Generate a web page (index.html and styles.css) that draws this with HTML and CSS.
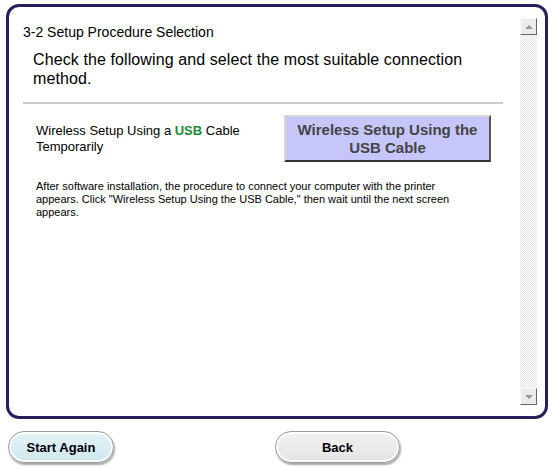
FILE: index.html
```html
<!DOCTYPE html>
<html lang="en">
<head>
    <title>Setup Procedure Selection</title>
    <meta charset="UTF-8" />
    <link rel="stylesheet" href="styles.css">
</head>
<body>
    <div class="frame">
        <div class="content">
            <div class="title">3-2 Setup Procedure Selection</div>
            <div class="lead">Check the following and select the most suitable connection method.</div>
            <hr class="rule">

            <div class="option">
                <div class="option-label">Wireless Setup Using a <span class="usb">USB</span> Cable Temporarily</div>
                <button class="option-button">Wireless Setup Using the USB Cable</button>
            </div>

            <p class="note">After software installation, the procedure to connect your computer with the printer appears. Click "Wireless Setup Using the USB Cable," then wait until the next screen appears.</p>
        </div>

        <div class="scrollbar">
            <div class="scroll-btn up"><span class="arrow-up"></span></div>
            <div class="scroll-track"></div>
            <div class="scroll-btn down"><span class="arrow-down"></span></div>
        </div>
    </div>

    <div class="footer">
        <button class="pill start">Start Again</button>
        <button class="pill back">Back</button>
    </div>
</body>
</html>
```

FILE: styles.css
```css
body {
    margin: 0;
    font-family: "Liberation Sans", Arial, sans-serif;
    background: #fff;
    width: 554px;
    height: 469px;
    overflow: hidden;
}

.frame {
    display: flex;
    margin: 4px 6px 0 6px;
    height: 409px;
    border: 3px solid #2a1e5c;
    border-radius: 13px;
    background: #fff;
}

.content {
    flex: 1;
    padding: 0 0 0 14px;
}

.title {
    margin-top: 17px;
    font-size: 14px;
    line-height: 16px;
    color: #000;
}

.lead {
    margin: 10px 0 0 10px;
    width: 450px;
    font-size: 16px;
    letter-spacing: 0.1px;
    line-height: 19px;
    color: #000;
}

.rule {
    margin: 14px 0 0 0;
    width: 480px;
    height: 0;
    border: none;
    border-top: 2px solid #cbcbcb;
}

.option {
    display: flex;
    align-items: flex-start;
    margin: 11px 0 0 13px;
}

.option-label {
    width: 235px;
    margin-top: 8px;
    font-size: 13px;
    line-height: 16px;
    color: #000;
}

.usb {
    color: #1d8a3c;
    font-weight: bold;
}

.option-button {
    margin-left: 13px;
    width: 207px;
    height: 47px;
    padding: 0;
    background: #c6c6fb;
    border: 2px solid;
    border-color: #d6d6d6 #555 #333 #d6d6d6;
    font-family: "Liberation Sans", Arial, sans-serif;
    font-weight: bold;
    font-size: 15px;
    line-height: 18px;
    color: #444;
    cursor: pointer;
}

.note {
    margin: 18px 0 0 13px;
    width: 430px;
    font-size: 11px;
    line-height: 13px;
    color: #000;
}

.scrollbar {
    display: flex;
    flex-direction: column;
    width: 17px;
    margin: 11px 8px 11px 0;
}

.scroll-btn {
    height: 15px;
    background: #ececec;
    border: 1px solid;
    border-color: #fafafa #666 #666 #fafafa;
    display: flex;
    align-items: center;
    justify-content: center;
}

.scroll-track {
    flex: 1;
    background-color: #fff;
    background-image: conic-gradient(#e6e6e6 25%, #fff 0 50%, #e6e6e6 0 75%, #fff 0);
    background-size: 2px 2px;
}

.arrow-up,
.arrow-down {
    width: 0;
    height: 0;
    border-left: 4px solid transparent;
    border-right: 4px solid transparent;
}

.arrow-up {
    border-bottom: 4px solid #999;
}

.arrow-down {
    border-top: 4px solid #999;
}

.footer {
    display: flex;
    margin: 12px 0 0 8px;
}

.pill {
    height: 32px;
    border-radius: 16px;
    border: 1px solid #9a9a9a;
    box-shadow: inset 0 0 0 2px #fff, 1px 2px 2px rgba(0, 0, 0, 0.35);
    font-family: "Liberation Sans", Tahoma, sans-serif;
    font-weight: bold;
    font-size: 13px;
    color: #000;
    cursor: pointer;
}

.start {
    width: 106px;
    background: linear-gradient(#e4f3f7, #cfe8ef);
}

.back {
    width: 125px;
    margin-left: 161px;
    background: linear-gradient(#f3f3f3, #e4e4e4);
}
```
